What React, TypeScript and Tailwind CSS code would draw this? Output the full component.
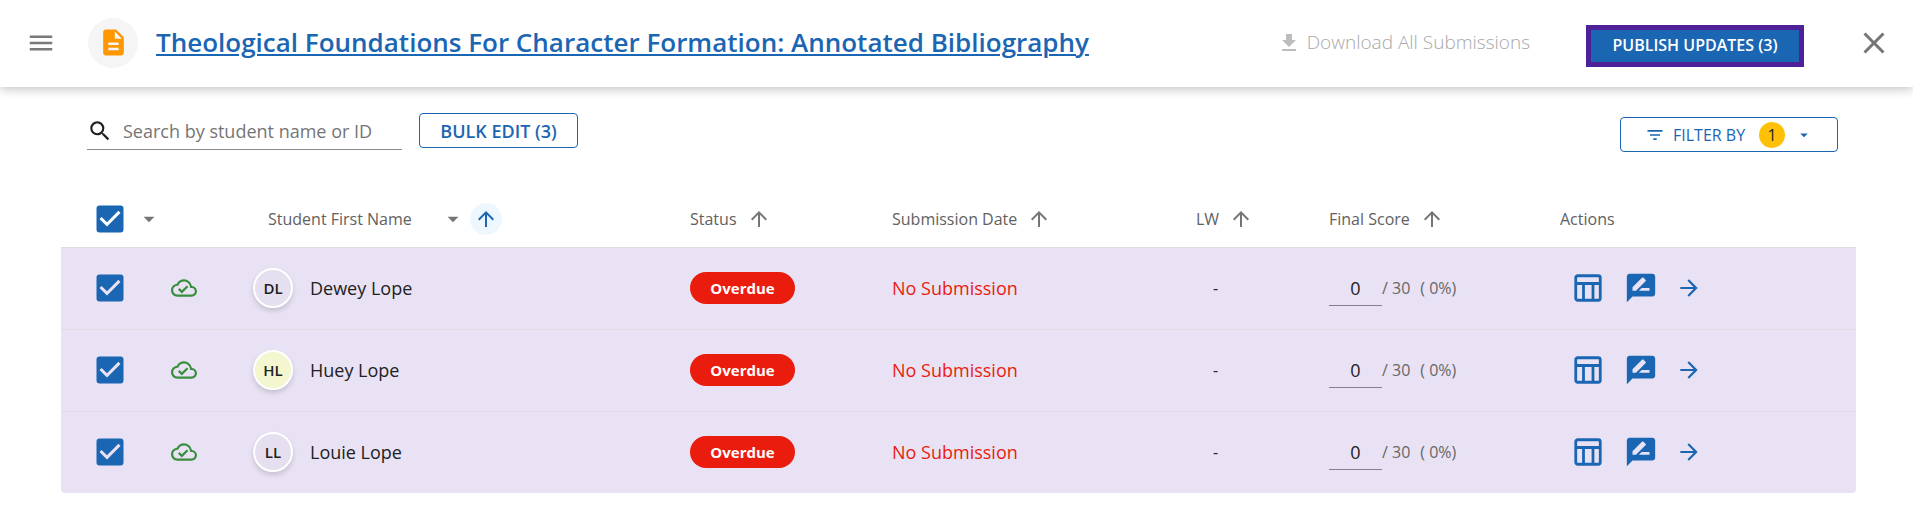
import { useState } from "react"
import {
  MdArrowDropDown,
  MdArrowForward,
  MdArrowUpward,
  MdCheckBox,
  MdCheckBoxOutlineBlank,
  MdClose,
  MdDescription,
  MdFileDownload,
  MdFilterList,
  MdMenu,
  MdOutlineCloudDone,
  MdRateReview,
  MdSearch,
} from "react-icons/md"

type Student = {
  id: string
  name: string
  initials: string
  avatar: string
}

const students: Student[] = [
  { id: "dewey", name: "Dewey Lope", initials: "DL", avatar: "bg-[#e6dff0]" },
  { id: "huey", name: "Huey Lope", initials: "HL", avatar: "bg-[#f3f6cf]" },
  { id: "louie", name: "Louie Lope", initials: "LL", avatar: "bg-[#e6dff0]" },
]

function Checkbox({ label, checked, onChange }: { label: string; checked: boolean; onChange: () => void }) {
  return (
    <label className="block size-9 cursor-pointer text-[#1b66b3]">
      <input type="checkbox" className="sr-only" aria-label={label} checked={checked} onChange={onChange} />
      {checked ? <MdCheckBox className="size-9" /> : <MdCheckBoxOutlineBlank className="size-9" />}
    </label>
  )
}

function SortHeader({ label }: { label: string }) {
  return (
    <div className="flex items-center gap-2.5">
      <span>{label}</span>
      <button aria-label={`Sort by ${label}`}>
        <MdArrowUpward className="size-6 text-[#757575]" />
      </button>
    </div>
  )
}

function TableIcon() {
  return (
    <svg viewBox="0 0 28 28" className="size-7" fill="none" stroke="currentColor" strokeWidth="2.8">
      <rect x="1.75" y="1.75" width="24.5" height="24.5" rx="2" />
      <path d="M2 9.5h24M9.5 9.5v17M19 9.5v17" />
    </svg>
  )
}

export default function App() {
  const [selected, setSelected] = useState<string[]>(students.map((s) => s.id))
  const allSelected = selected.length === students.length

  const toggle = (id: string) =>
    setSelected((prev) => (prev.includes(id) ? prev.filter((s) => s !== id) : [...prev, id]))

  return (
    <div className="bg-white font-['Open_Sans',sans-serif] text-[#212121]">
      {/* Top bar */}
      <header className="flex h-[87px] items-center pb-0.5 pl-[26px] pr-[21px] shadow-[0_2px_10px_rgba(0,0,0,0.25)]">
        <button aria-label="Menu" className="text-[#7a7a7a]">
          <MdMenu className="size-[30px]" />
        </button>
        <div className="ml-8 flex size-[50px] items-center justify-center rounded-full bg-[#f5f5f5]">
          <MdDescription className="size-[31px] text-[#ff9800]" />
        </div>
        <h1 className="ml-[18px] text-[26px] font-semibold text-[#1b66b3]">
          <a href="#" className="underline decoration-2 underline-offset-2">
            Theological Foundations For Character Formation: Annotated Bibliography
          </a>
        </h1>
        <div className="ml-auto flex items-center">
          <button disabled className="flex items-center gap-1.5 text-[19px] font-light text-[#a8a8a8]">
            <MdFileDownload className="size-6 text-[#bdbdbd]" />
            Download All Submissions
          </button>
          <button className="ml-14 mt-1.5 h-[42px] w-[218px] border-5 border-[#4f2199] bg-[#1b66b3] pb-0.5 text-base font-semibold text-white">
            PUBLISH UPDATES (3)
          </button>
          <button aria-label="Close" className="ml-[52px] text-[#757575]">
            <MdClose className="size-9" />
          </button>
        </div>
      </header>

      {/* Toolbar */}
      <div className="flex items-start pl-[87px] pr-[75px] pt-[26px]">
        <label className="flex h-[37px] w-[315px] items-center border-b border-[#8a8a8a]">
          <MdSearch className="size-[26px] shrink-0" />
          <input
            type="text"
            aria-label="Search by student name or ID"
            placeholder="Search by student name or ID"
            className="ml-2.5 w-full text-lg outline-none placeholder:text-[#757575]"
          />
        </label>
        <button className="ml-[17px] h-[35px] w-[159px] rounded border border-[#1b66b3] text-lg font-semibold text-[#1b66b3]">
          BULK EDIT (3)
        </button>
        <button className="ml-auto mt-1 flex h-[35px] w-[218px] items-center rounded border border-[#1b66b3] pl-6 text-base font-medium text-[#1b66b3]">
          <MdFilterList className="size-5" />
          <span className="ml-2">FILTER BY</span>
          <span className="ml-3.5 flex size-[26px] items-center justify-center rounded-full bg-[#ffc107] text-[#212121]">
            1
          </span>
          <MdArrowDropDown className="ml-2.5 size-[18px]" />
        </button>
      </div>

      {/* Submissions */}
      <div className="mt-[38px] pl-[61px] pr-[57px]">
        <table className="w-full table-fixed text-left">
          <colgroup>
            <col className="w-[110px]" />
            <col className="w-[82px]" />
            <col className="w-[437px]" />
            <col className="w-[202px]" />
            <col className="w-[304px]" />
            <col className="w-[133px]" />
            <col className="w-[231px]" />
            <col />
          </colgroup>
          <thead>
            <tr className="h-[57px] text-base text-[#616161] *:font-normal">
              <th colSpan={2} className="pl-[31px]">
                <div className="flex items-center">
                  <Checkbox
                    label="Select all students"
                    checked={allSelected}
                    onChange={() => setSelected(allSelected ? [] : students.map((s) => s.id))}
                  />
                  <button aria-label="Selection options" className="ml-2">
                    <MdArrowDropDown className="size-[26px] text-[#757575]" />
                  </button>
                </div>
              </th>
              <th className="pl-[15px]">
                <div className="flex items-center">
                  <span>Student First Name</span>
                  <button aria-label="Name options" className="ml-7">
                    <MdArrowDropDown className="size-[26px] text-[#757575]" />
                  </button>
                  <button
                    aria-label="Sort by name"
                    className="ml-1 flex size-8 items-center justify-center rounded-full bg-[#eef6fe] text-[#1b66b3]"
                  >
                    <MdArrowUpward className="size-6" />
                  </button>
                </div>
              </th>
              <th><SortHeader label="Status" /></th>
              <th><SortHeader label="Submission Date" /></th>
              <th><SortHeader label="LW" /></th>
              <th><SortHeader label="Final Score" /></th>
              <th>Actions</th>
            </tr>
          </thead>
          <tbody>
            {students.map((s) => (
              <tr
                key={s.id}
                className="h-[82px] bg-[#e9e2f4] shadow-[inset_0_1px_0_#dfdce4] last:*:first:rounded-bl last:*:last:rounded-br"
              >
                <td className="pl-[31px]">
                  <Checkbox label={`Select ${s.name}`} checked={selected.includes(s.id)} onChange={() => toggle(s.id)} />
                </td>
                <td>
                  <MdOutlineCloudDone className="size-[26px] text-[#388e3c]" />
                </td>
                <td>
                  <div className="flex items-center">
                    <div
                      className={`flex size-10 items-center justify-center rounded-full border-2 border-white text-[15px] font-semibold shadow-[0_3px_5px_rgba(0,0,0,0.15)] ${s.avatar}`}
                    >
                      {s.initials}
                    </div>
                    <span className="ml-[17px] text-lg">{s.name}</span>
                  </div>
                </td>
                <td>
                  <span className="inline-flex h-8 w-[105px] items-center justify-center rounded-full bg-[#ea1c0d] text-[15px] font-bold text-white">
                    Overdue
                  </span>
                </td>
                <td className="text-lg text-[#ea1c0d]">No Submission</td>
                <td className="pl-[17px] text-base">-</td>
                <td>
                  <div className="flex items-center text-base text-[#666666]">
                    <input
                      type="text"
                      aria-label={`Final score for ${s.name}`}
                      defaultValue="0"
                      className="h-9 w-[53px] border-b border-[#858090] text-center text-lg text-[#212121] outline-none"
                    />
                    <span>/ 30</span>
                    <span className="ml-2.5">( 0%)</span>
                  </div>
                </td>
                <td className="pl-3.5 text-[#1b66b3]">
                  <div className="flex items-center">
                    <button aria-label="Open rubric"><TableIcon /></button>
                    <button aria-label="Write feedback" className="ml-[22px]">
                      <MdRateReview className="size-[34px]" />
                    </button>
                    <button aria-label="Open submission" className="ml-[18px]">
                      <MdArrowForward className="size-[26px]" />
                    </button>
                  </div>
                </td>
              </tr>
            ))}
          </tbody>
        </table>
      </div>
    </div>
  )
}
